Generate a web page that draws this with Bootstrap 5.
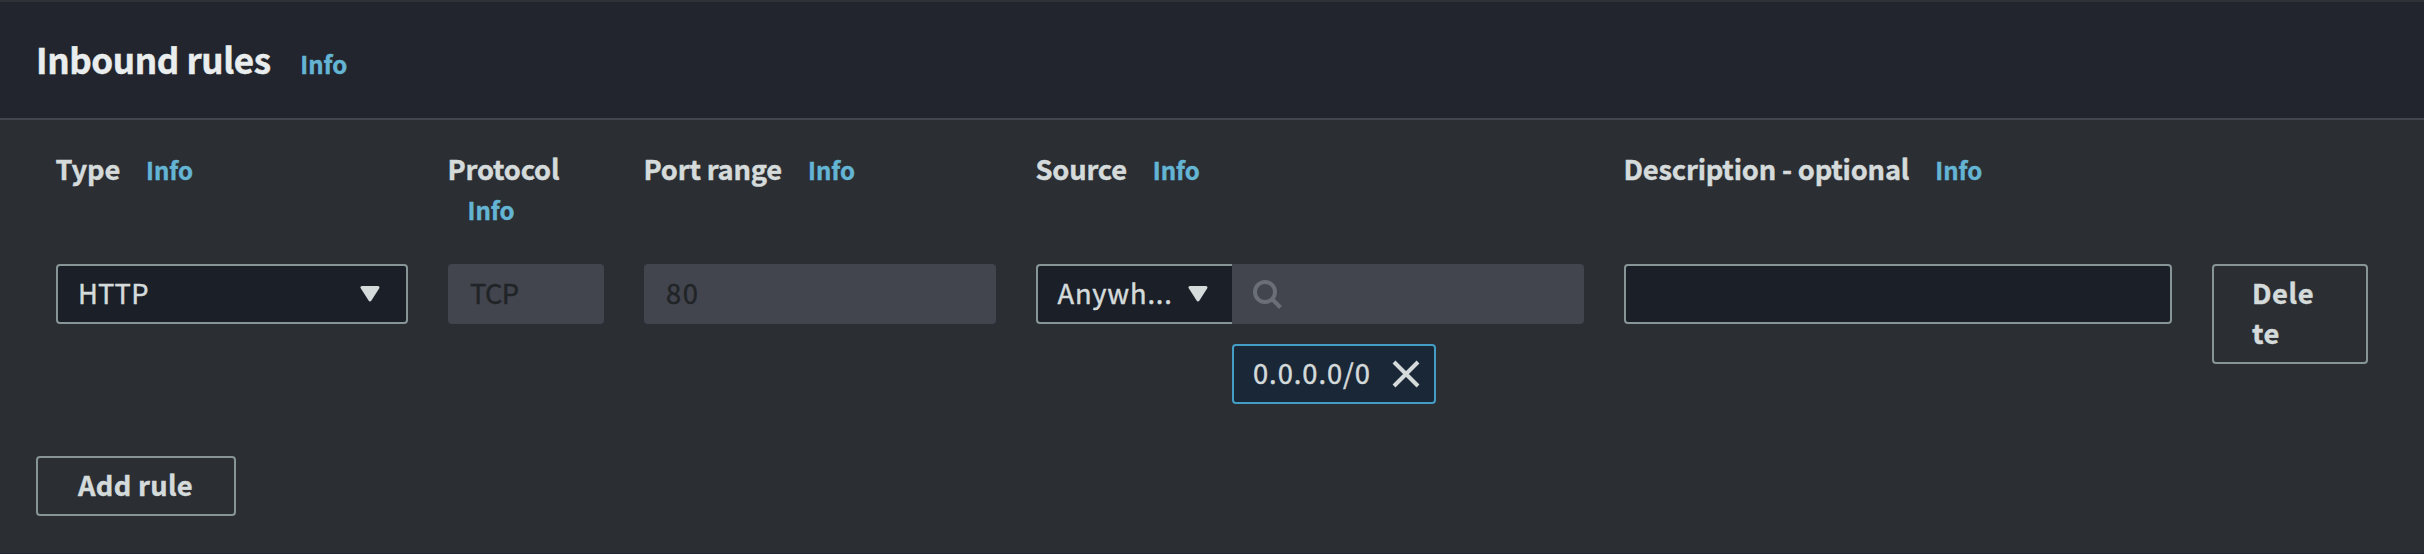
<!DOCTYPE html>
<html lang="en">
<head>
<meta charset="utf-8">
<title>Inbound rules</title>
<link href="https://cdn.jsdelivr.net/npm/bootstrap@5.3.0/dist/css/bootstrap.min.css" rel="stylesheet">
<style>
body{background:#2b2e33;color:#d5dbdb;font-family:"Noto Sans CJK SC","Noto Sans",sans-serif;font-size:27.3px;line-height:40px;overflow:hidden;-webkit-text-stroke:.45px currentColor}
.panel{height:554px;border-top:2px solid #2f3338;border-bottom:1px solid #22252d}
.panel-head{height:118px;background:#22252d;border-bottom:2px solid #42454e;padding:35px 36px 0}
.panel-head h2{font-size:35px;line-height:44px;font-weight:700;color:#eaeded;letter-spacing:-.4px}
.panel-head .info{margin-left:22px}
.info{display:inline-block;margin-left:20px;font-size:24px;line-height:40px;font-weight:700;color:#64b4d4;text-decoration:none;letter-spacing:0}
.panel-body{padding:28px 36px 0}
.rules{--bs-gutter-x:40px;margin:0}
.lbl{height:80px;margin-bottom:36px;font-weight:700;letter-spacing:-.2px;margin-left:-.5px}
.box{height:60px;border:2px solid #879596;border-radius:4px;background:#1a1f28;padding:0 21px 4px 20px;letter-spacing:.2px}
.box.off{background:#42454e;border-color:#42454e;color:#212427}
.box.tcp{letter-spacing:-.7px}
.box.port{letter-spacing:1.5px}
.box.kind{padding-right:26px}
.pick{width:196px;border-right:0;border-radius:4px 0 0 4px;padding:0 24px 4px 19.5px;letter-spacing:.8px}
.search{border-radius:0 4px 4px 0;padding:0 18px}
.chip{width:204px;height:60px;margin:20px 0 0 196px;border:2px solid #449dc5;border-radius:4px;background:#192737;padding:0 14px 4px 19px;letter-spacing:.95px}
.act{border:2px solid #879596;border-radius:4px;color:#d5dbdb;background:transparent;font:inherit;font-weight:700;letter-spacing:.3px;text-align:left}
.del{width:156px;height:100px;padding:6px 48px 10px 38px;word-break:break-all;letter-spacing:.6px}
.add{width:200px;height:60px;margin-top:52px;padding:6px 0 10px 40px}
svg{display:block;flex:none}
</style>
</head>
<body>
<main class="panel">
  <header class="panel-head"><h2 class="m-0">Inbound rules <a class="info">Info</a></h2></header>
  <div class="panel-body">
    <div class="row rules">
      <div class="col-2">
        <div class="lbl">Type <a class="info">Info</a></div>
        <div class="box kind d-flex align-items-center justify-content-between"><span>HTTP</span>
          <svg width="20" height="16" viewBox="0 0 20 16" class="mt-1"><path d="M2 1.500h16L10 14z" fill="#d5dbdb" stroke="#d5dbdb" stroke-width="3" stroke-linejoin="round"/></svg></div>
      </div>
      <div class="col-1">
        <div class="lbl">Protocol <a class="info">Info</a></div>
        <div class="box off tcp d-flex align-items-center">TCP</div>
      </div>
      <div class="col-2">
        <div class="lbl">Port range <a class="info">Info</a></div>
        <div class="box off port d-flex align-items-center">80</div>
      </div>
      <div class="col-3">
        <div class="lbl">Source <a class="info">Info</a></div>
        <div class="d-flex">
          <div class="box pick d-flex align-items-center justify-content-between"><span>Anywh...</span>
            <svg width="20" height="16" viewBox="0 0 20 16" class="mt-1"><path d="M2 1.500h16L10 14z" fill="#d5dbdb" stroke="#d5dbdb" stroke-width="3" stroke-linejoin="round"/></svg></div>
          <div class="box off search flex-grow-1 d-flex align-items-center">
            <svg width="32" height="32" viewBox="0 0 32 32" fill="none" stroke="#696e77" stroke-width="4"><circle cx="13" cy="14" r="10"/><path d="M20 21l8.500 8.500"/></svg></div>
        </div>
        <div class="chip d-flex align-items-center"><span>0.0.0.0/0</span>
          <svg class="mt-1 ms-auto" width="28" height="28" viewBox="0 0 28 28" stroke="#d5dbdb" stroke-width="4"><path d="M2 2l24 24M26 2L2 26"/></svg></div>
      </div>
      <div class="col-3">
        <div class="lbl">Description - optional <a class="info">Info</a></div>
        <div class="box"></div>
      </div>
      <div class="col-1">
        <div class="lbl"></div>
        <button class="act del">Delete</button>
      </div>
    </div>
    <button class="act add d-block">Add rule</button>
  </div>
</main>
<script src="https://cdn.jsdelivr.net/npm/bootstrap@5.3.0/dist/js/bootstrap.bundle.min.js"></script>
</body>
</html>
